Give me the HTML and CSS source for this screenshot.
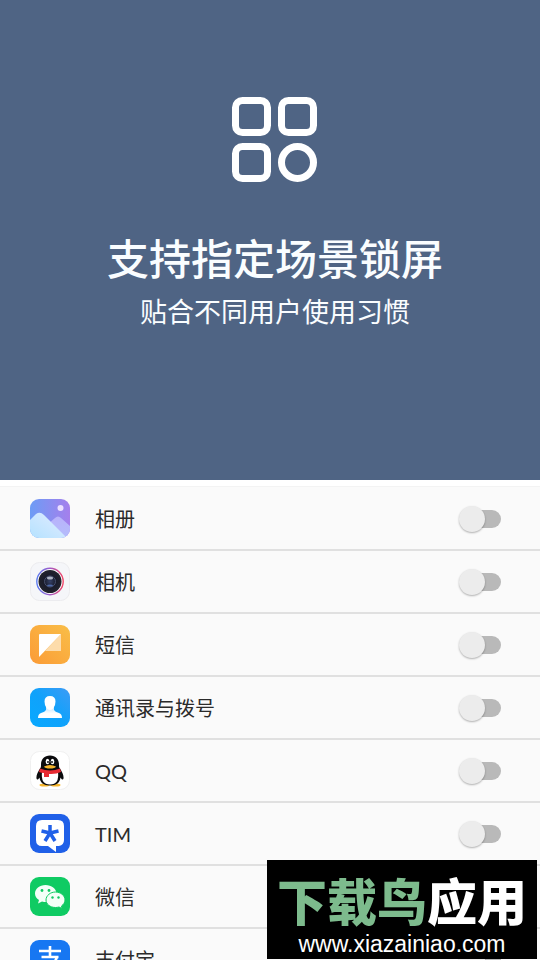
FILE: index.html
```html
<!DOCTYPE html>
<html lang="zh-CN">
<head>
  <meta charset="UTF-8" />
  <meta name="viewport" content="width=device-width, initial-scale=1" />
  <title>支持指定场景锁屏</title>
  <link rel="stylesheet" href="styles.css">
</head>
<body>
  <header class="hero">
    <svg class="hero-icon" viewBox="0 0 86 86" aria-hidden="true">
      <g fill="none" stroke="#fff" stroke-width="7">
        <rect x="3.5" y="3.5" width="32" height="32" rx="7" />
        <rect x="49.5" y="3.5" width="32" height="32" rx="7" />
        <rect x="3.5" y="49.5" width="32" height="32" rx="7" />
        <circle cx="65.5" cy="65.5" r="16" />
      </g>
    </svg>
    <h1>支持指定场景锁屏</h1>
    <p>贴合不同用户使用习惯</p>
  </header>

  <main class="app-list">
    <!-- 相册 -->
    <div class="app-row">
      <svg class="app-icon" viewBox="0 0 40 40" aria-hidden="true">
        <defs>
          <linearGradient id="album-bg" x1="0" x2="1"><stop offset="0" stop-color="#6d9cf5" /><stop offset="1" stop-color="#a57fec" /></linearGradient>
          <linearGradient id="album-front" x1="1" y1="0" x2="0" y2="1"><stop offset="0" stop-color="#e3ecff" /><stop offset="1" stop-color="#b4e2ff" /></linearGradient>
          <linearGradient id="album-back" x1="0" y1="0" x2="0" y2="1"><stop offset="0" stop-color="#b9b2fb" /><stop offset="1" stop-color="#b3bdfb" /></linearGradient>
          <clipPath id="album-clip"><rect width="40" height="39" rx="9" /></clipPath>
        </defs>
        <g clip-path="url(#album-clip)">
          <rect width="40" height="40" fill="url(#album-bg)" />
          <path d="M18 25l7-6q3-3 6 0l9 8v13H18z" fill="url(#album-back)" />
          <path d="M0 21l6-6q4-3 8 1l23 23v1H0z" fill="url(#album-front)" />
          <circle cx="30.5" cy="9" r="3" fill="#ebdfff" />
        </g>
      </svg>
      <label for="album">相册</label>
      <input class="switch" type="checkbox" id="album">
    </div>

    <!-- 相机 -->
    <div class="app-row">
      <svg class="app-icon" viewBox="0 0 40 40" aria-hidden="true">
        <defs>
          <linearGradient id="ring" x1="0" y1="0" x2="1" y2="0"><stop offset="0" stop-color="#5b7df0" /><stop offset=".5" stop-color="#a05ac8" /><stop offset="1" stop-color="#f04868" /></linearGradient>
          <radialGradient id="lens"><stop offset="0" stop-color="#354167" /><stop offset=".5" stop-color="#191b2b" /><stop offset="1" stop-color="#22232c" /></radialGradient>
        </defs>
        <rect x=".5" y=".5" width="39" height="38" rx="9" fill="#f5f6f9" stroke="#ececef" />
        <circle cx="20" cy="19.5" r="13.2" fill="#fff" stroke="url(#ring)" stroke-width="1.4" />
        <circle cx="20" cy="19.5" r="11.5" fill="url(#lens)" />
        <circle cx="20" cy="19.5" r="5.5" fill="none" stroke="#48516e" />
        <ellipse cx="20" cy="16" rx="3" ry="1.5" fill="#aeb3c2" />
        <ellipse cx="20" cy="23.5" rx="3" ry="1" fill="#4d68a8" />
      </svg>
      <label for="camera">相机</label>
      <input class="switch" type="checkbox" id="camera">
    </div>

    <!-- 短信 -->
    <div class="app-row">
      <svg class="app-icon" viewBox="0 0 40 40" aria-hidden="true">
        <defs>
          <linearGradient id="sms-bg" x1="1" y1="0" x2="0" y2="1"><stop offset="0" stop-color="#f9be48" /><stop offset="1" stop-color="#fb9b36" /></linearGradient>
        </defs>
        <rect width="40" height="39" rx="9" fill="url(#sms-bg)" />
        <path d="M31 9v17H15z" fill="#fddcab" />
        <path d="M9 10q0-1 1-1h21L9 32z" fill="#fff" />
      </svg>
      <label for="sms">短信</label>
      <input class="switch" type="checkbox" id="sms">
    </div>

    <!-- 通讯录与拨号 -->
    <div class="app-row">
      <svg class="app-icon" viewBox="0 0 40 40" aria-hidden="true">
        <defs>
          <linearGradient id="contact-bg" x1="1" y1="0" x2="0" y2="1"><stop offset="0" stop-color="#3d9bf5" /><stop offset=".5" stop-color="#10a2fb" /><stop offset="1" stop-color="#08a9ff" /></linearGradient>
          <linearGradient id="contact-body" x1="0" y1="0" x2="0" y2="1"><stop offset="0" stop-color="#bfe5ff" /><stop offset=".6" stop-color="#fff" /></linearGradient>
        </defs>
        <rect width="40" height="39" rx="9" fill="url(#contact-bg)" />
        <path d="M16 19h8v3q1 2 5 3 3 1 3 5H8q0-4 3-5 4-1 5-3z" fill="url(#contact-body)" />
        <path d="M20 8q5.5 0 5.5 5.5 0 4-2 6.500-1.500 2-3.500 2t-3.500-2q-2-2.500-2-6.500Q14.500 8 20 8z" fill="#fff" />
      </svg>
      <label for="contacts">通讯录与拨号</label>
      <input class="switch" type="checkbox" id="contacts">
    </div>

    <!-- QQ -->
    <div class="app-row">
      <svg class="app-icon" viewBox="0 0 40 40" aria-hidden="true">
        <rect x=".5" y=".5" width="39" height="38" rx="9" fill="#fff" stroke="#f0f0f0" />
        <ellipse cx="14.500" cy="34" rx="5" ry="1.500" fill="#f5b52c" />
        <ellipse cx="25.500" cy="34" rx="5" ry="1.500" fill="#f5b52c" />
        <path d="M20 4.500c6 0 9 4 9 9 0 2 0 3 1 4 2 3 4 7 3.500 10-.5 2-2 1-3-1-.5 5-4 8-10.500 8S10 31.500 9.500 26.500c-1 2-2.500 3-3 1-.5-3 1.500-7 3.500-10 1-1 1-2 1-4 0-5 3-9 9-9z" fill="#0b0b0d" />
        <path d="M12 21h16q1.500 12.500-8 12.500T12 21z" fill="#fff" />
        <path d="M10 17.500q10 4 20 0l1 3.500q-5 2.500-12 2v3h-5v-4q-3 0-5-1z" fill="#e72a32" />
        <ellipse cx="17.500" cy="10.500" rx="1.800" ry="2.700" fill="#fff" />
        <ellipse cx="22.500" cy="10.500" rx="1.800" ry="2.700" fill="#fff" />
        <circle cx="18" cy="11" r=".9" />
        <circle cx="22" cy="11" r=".9" />
        <path d="M14 15.500q6-3 12 0-1 2-6 2t-6-2z" fill="#f5b52c" />
      </svg>
      <label for="qq">QQ</label>
      <input class="switch" type="checkbox" id="qq">
    </div>

    <!-- TIM -->
    <div class="app-row">
      <svg class="app-icon" viewBox="0 0 40 40" aria-hidden="true">
        <rect width="40" height="39" rx="9" fill="#2060e8" />
        <path d="M12 6h16q6 0 6 6v14q0 5-5 6h-3v6l-8-6h-6q-6 0-6-6V12q0-6 6-6z" fill="#fff" />
        <path d="M20 19v-8M20 19l8.500-2M20 19l5 8M20 19l-5 8M20 19l-8.500-2" stroke="#2060e8" stroke-width="3.500" />
      </svg>
      <label for="tim">TIM</label>
      <input class="switch" type="checkbox" id="tim">
    </div>

    <!-- 微信 -->
    <div class="app-row">
      <svg class="app-icon" viewBox="0 0 40 40" aria-hidden="true">
        <rect width="40" height="39" rx="9" fill="#0fcb63" />
        <path d="M15.500 8C9.500 8 5 12 5 16.500c0 3 1.500 5 4 6.500l-1 3.500 4-2q2 .5 4 .5c6 0 10.500-4 10.500-8.500S21.500 8 15.500 8z" fill="#f4fff8" />
        <path d="M25.500 15c5 0 9.500 3.500 9.500 8 0 2.500-1.500 4.500-3.500 6l.5 2.500-3-1.500q-2 .5-3.500.5c-5.500 0-9.500-3.500-9.500-7.500 0-4.500 4.500-8 9.500-8z" fill="#f4fff8" stroke="#0fcb63" stroke-width="1" />
        <g fill="#0fcb63">
          <circle cx="12" cy="13.500" r="1.400" />
          <circle cx="19" cy="13.500" r="1.400" />
          <circle cx="22.500" cy="20.500" r="1.200" />
          <circle cx="28.500" cy="20.500" r="1.200" />
        </g>
      </svg>
      <label for="wechat">微信</label>
      <input class="switch" type="checkbox" id="wechat">
    </div>

    <!-- 支付宝 -->
    <div class="app-row">
      <svg class="app-icon" viewBox="0 0 40 40" aria-hidden="true">
        <rect width="40" height="39" rx="9" fill="#1777f2" />
        <path d="M9 11h22M11.500 17h17M20 6v11M27 17q-3 8-9 11-6 3-9 0-2-4 2-6 5-2 12 1 8 4 16 6" fill="none" stroke="#fff" stroke-width="2.600" />
      </svg>
      <label for="alipay">支付宝</label>
      <input class="switch" type="checkbox" id="alipay">
    </div>
  </main>

  <aside class="watermark">
    <div class="brand"><span>下载鸟</span>应用</div>
    <div class="site">www.xiazainiao.com</div>
  </aside>
</body>
</html>
```
FILE: styles.css
```css
* {
  box-sizing: border-box;
}

body {
  margin: 0;
  height: 100vh;
  overflow: hidden;
  background: #fafafa;
  color: #2b2b2b;
  font-family: Lato, "Noto Sans CJK SC", sans-serif;
}

.hero {
  display: flex;
  flex-direction: column;
  align-items: center;
  height: 50vh;
  padding: 97px 0 0 10px;
  background: #4f6484;
  color: #fafdff;
}

.hero-icon {
  width: 86px;
  height: 86px;
}

.hero h1 {
  margin: 46px 0 0;
  font-size: 42px;
  font-weight: 500;
  line-height: 60px;
}

.hero p {
  margin: 4px 0 0;
  font-size: 27px;
  line-height: 38px;
}

.app-list {
  padding-top: 8px;
  background: linear-gradient(#fff 6px, #f3f3f3 6px, #f3f3f3 7px, #fafafa 7px);
}

.app-row {
  display: flex;
  align-items: center;
  height: 63px;
  padding: 0 39px 0 30px;
  border-bottom: 2px solid #e0e0e0;
}

.app-icon {
  flex: none;
  width: 40px;
  height: 40px;
}

.app-row label {
  flex: 1;
  padding-left: 25px;
  font-size: 20px;
  line-height: 30px;
}

/* Переключатель */
.switch {
  appearance: none;
  position: relative;
  width: 36px;
  height: 18px;
  margin: 0;
  border-radius: 9px;
  background: #b9b9b9;
  cursor: pointer;
}

.switch::before {
  content: "";
  position: absolute;
  top: -4px;
  left: -6px;
  width: 26px;
  height: 26px;
  border-radius: 50%;
  background: #ececec;
  box-shadow: 0 1px 2px rgba(0, 0, 0, 0.3);
}

.switch:checked {
  background: #9db4d6;
}

.switch:checked::before {
  left: 16px;
  background: #4f6484;
}

.watermark {
  position: fixed;
  right: 3px;
  bottom: 1px;
  width: 270px;
  height: 99px;
  padding-top: 8px;
  background: #000;
  color: #fff;
  text-align: center;
  white-space: nowrap;
}

.brand {
  font-family: "Noto Sans CJK SC", sans-serif;
  font-size: 50px;
  font-style: oblique 8deg;
  font-weight: 900;
  line-height: 62px;
}

.brand span {
  color: #7dbb8d;
}

.site {
  font-family: "Liberation Sans", sans-serif;
  font-size: 23px;
  line-height: 28px;
}
```
